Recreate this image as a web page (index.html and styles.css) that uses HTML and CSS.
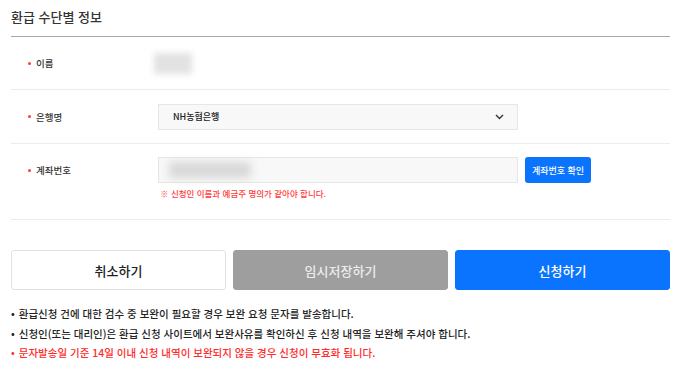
FILE: index.html
```html
<!DOCTYPE html>
<html lang="ko">
<head>
    <meta charset="UTF-8">
    <meta name="viewport" content="width=device-width, initial-scale=1.0">
    <title>환급 수단별 정보</title>
    <link rel="stylesheet" href="styles.css">
</head>
<body>
    <div class="wrap">
        <h2 class="title">환급 수단별 정보</h2>

        <div class="row row-name">
            <div class="label"><span>이름</span></div>
            <div class="field">
                <span class="masked masked-name"></span>
            </div>
        </div>

        <div class="row row-bank">
            <div class="label"><span>은행명</span></div>
            <div class="field">
                <div class="select">
                    <span>NH농협은행</span>
                    <svg class="chevron" width="9" height="6" viewBox="0 0 9 6">
                        <path d="M1 1l3.5 3.5L8 1" fill="none" stroke="#333" stroke-width="1.4"/>
                    </svg>
                </div>
            </div>
        </div>

        <div class="row row-account">
            <div class="label"><span>계좌번호</span></div>
            <div class="field">
                <div class="account-line">
                    <div class="input">
                        <span class="masked masked-account"></span>
                    </div>
                    <button class="btn-check">계좌번호 확인</button>
                </div>
                <p class="warn">※ 신청인 이름과 예금주 명의가 같아야 합니다.</p>
            </div>
        </div>

        <div class="actions">
            <button class="btn btn-cancel">취소하기</button>
            <button class="btn btn-temp">임시저장하기</button>
            <button class="btn btn-submit">신청하기</button>
        </div>

        <ul class="notes">
            <li>환급신청 건에 대한 검수 중 보완이 필요할 경우 보완 요청 문자를 발송합니다.</li>
            <li>신청인(또는 대리인)은 환급 신청 사이트에서 보완사유를 확인하신 후 신청 내역을 보완해 주셔야 합니다.</li>
            <li class="red">문자발송일 기준 14일 이내 신청 내역이 보완되지 않을 경우 신청이 무효화 됩니다.</li>
        </ul>
    </div>
</body>
</html>
```

FILE: styles.css
```css
body {
    margin: 0;
    font-family: "Noto Sans CJK KR", "Noto Sans", sans-serif;
    color: #222;
    background: #fff;
}
.wrap {
    padding: 0 12px 0 11px;
}
.title {
    margin: 0;
    padding: 8px 0 0;
    height: 28px;
    font-size: 13px;
    font-weight: 500;
    line-height: 18px;
    color: #333;
    border-bottom: 1px solid #a8a8a8;
}
.row {
    display: flex;
    border-bottom: 1px solid #ececec;
}
.label {
    width: 147px;
    flex: none;
    padding-left: 17px;
    box-sizing: border-box;
    font-size: 9.5px;
    font-weight: 500;
    color: #333;
    display: flex;
    align-items: center;
}
.label span {
    display: flex;
    align-items: center;
    line-height: 14px;
}
.label span::before {
    content: "";
    width: 3px;
    height: 3px;
    border-radius: 50%;
    background: #ff3b3b;
    margin-right: 5px;
}
.row-name {
    height: 52px;
}
.row-bank {
    height: 53px;
}
.field {
    flex: 1;
    display: flex;
    flex-direction: column;
    justify-content: center;
}
.masked {
    display: block;
    background: #e2e2e2;
    filter: blur(3px);
}
.masked-name {
    width: 38px;
    height: 21px;
    margin-left: -4px;
}
.select,
.input {
    width: 360px;
    height: 26px;
    box-sizing: border-box;
    border: 1px solid #e6e6e6;
    background: #f8f8f8;
    display: flex;
    align-items: center;
}
.select {
    justify-content: space-between;
    padding: 0 13px 0 14px;
    font-size: 9px;
    font-weight: 500;
    color: #222;
}
.row-account {
    height: 75px;
}
.row-account .label {
    align-items: flex-start;
    padding-top: 19px;
}
.row-account .field {
    justify-content: flex-start;
    padding-top: 13px;
}
.account-line {
    display: flex;
    gap: 7px;
}
.input {
    padding-left: 10px;
}
.masked-account {
    width: 82px;
    height: 16px;
    background: #d8d8d8;
    filter: blur(4px);
}
.btn-check {
    height: 26px;
    width: 66px;
    padding: 0;
    border: 0;
    border-radius: 3px;
    background: #0a74ff;
    color: #fff;
    font-family: inherit;
    font-size: 9px;
    font-weight: 500;
}
.warn {
    margin: 4px 0 0;
    font-size: 8.5px;
    line-height: 12px;
    color: #ff3b3b;
    font-weight: 500;
    padding-left: 2px;
}
.actions {
    display: flex;
    gap: 7px;
    margin-top: 30px;
}
.btn {
    flex: 1;
    height: 40px;
    border-radius: 3px;
    font-family: inherit;
    font-size: 13px;
    font-weight: 500;
    padding: 0;
}
.btn-cancel {
    background: #fff;
    border: 1px solid #e2e2e2;
    color: #222;
}
.btn-temp {
    background: #9e9e9e;
    border: 1px solid #9e9e9e;
    color: #ececec;
}
.btn-submit {
    background: #0a74ff;
    border: 1px solid #0a74ff;
    color: #fff;
}
.notes {
    list-style: none;
    margin: 14px 0 0;
    padding: 0;
    font-size: 10.5px;
    font-weight: 500;
    line-height: 19.5px;
    color: #222;
}
.notes li::before {
    content: "•";
    margin-right: 4px;
}
.notes .red {
    color: #ff2b2b;
}
```
